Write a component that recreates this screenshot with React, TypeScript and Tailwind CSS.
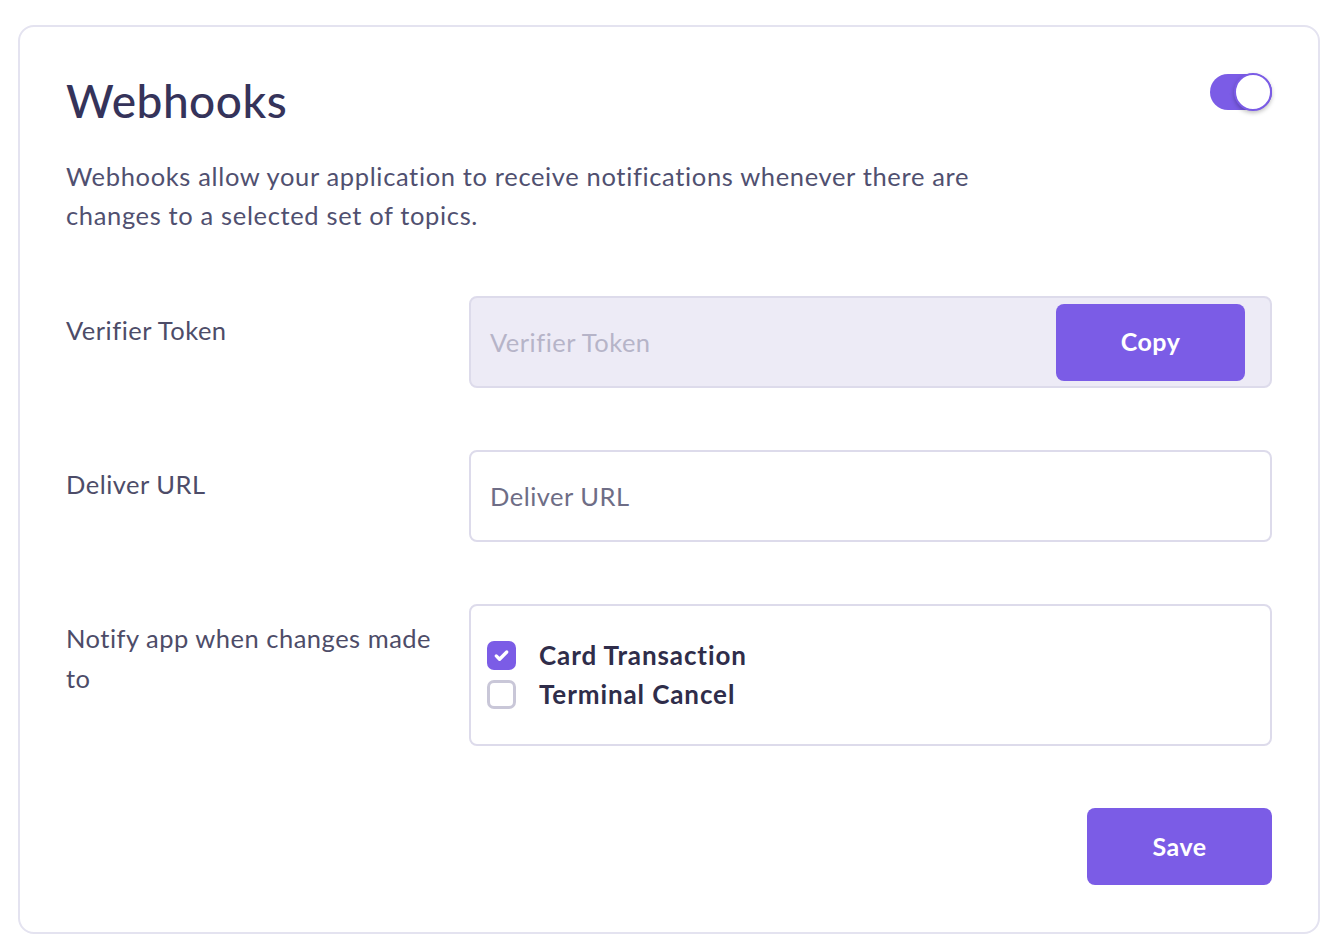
import { useState } from 'react';

function Check({ checked, label, onToggle }: { checked: boolean; label: string; onToggle: () => void }) {
  return (
    <label className="flex cursor-pointer items-center gap-[23px]" onClick={onToggle}>
      <span className={`flex h-[29px] w-[29px] items-center justify-center rounded-[7px] ${checked ? 'bg-[#7b5ce6]' : 'border-[3px] border-[#c9c7d8] bg-white'}`}>
        {checked && (
          <svg viewBox="0 0 24 24" className="h-[21px] w-[21px]" fill="none" stroke="white" strokeWidth="3.8" strokeLinecap="round" strokeLinejoin="round">
            <path d="M6 12.5l3.8 3.8L18 8" />
          </svg>
        )}
      </span>
      <span className="text-[26px] font-bold leading-[39px] tracking-[0.9px] text-[#2f2d4a]">{label}</span>
    </label>
  );
}

export default function App() {
  const [enabled, setEnabled] = useState(true);
  const [topics, setTopics] = useState({ card: true, terminal: false });

  return (
    <div className="min-h-screen bg-white pl-[18px] pr-[22px] pt-[25px] pb-[17px] font-['Lato',sans-serif]">
      <div className="rounded-[16px] border-2 border-[#e4e3f0] bg-white px-[46px] pt-[44px] pb-[47px]">
        <div className="flex items-start justify-between">
          <h1 className="text-[46px] font-medium leading-[60px] tracking-[0.5px] text-[#35335a]">Webhooks</h1>
          <button
            onClick={() => setEnabled(!enabled)}
            className="relative mt-[3px] h-[36px] w-[62px] rounded-full bg-[#7b5ce6]"
          >
            <span className="absolute right-0 top-[-1px] h-[38px] w-[38px] rounded-full border-2 border-[#7b5ce6] bg-white shadow-[0_2px_4px_rgba(0,0,0,0.25)]" />
          </button>
        </div>

        <p className="mt-[26px] w-[925px] text-[25.5px] leading-[39px] tracking-[0.65px] text-[#505070]">
          Webhooks allow your application to receive notifications whenever there are changes to a selected set of topics.
        </p>

        <div className="mt-[61px] flex flex-col gap-[62px]">
          <div className="flex">
            <div className="w-[403px] pt-[14px] text-[25.5px] leading-[40px] tracking-[0.5px] text-[#4d4c68]">Verifier Token</div>
            <div className="flex h-[92px] flex-1 items-center rounded-[8px] border-2 border-[#dddbeb] bg-[#edebf6] pl-[19px] pr-[25px]">
              <span className="flex-1 text-[25.5px] tracking-[0.5px] text-[#b6b4c8]">Verifier Token</span>
              <button className="h-[77px] w-[189px] rounded-[8px] bg-[#7b5ce6] text-[25px] font-bold tracking-[0.5px] text-white">Copy</button>
            </div>
          </div>

          <div className="flex">
            <div className="w-[403px] pt-[14px] text-[25.5px] leading-[40px] tracking-[0.5px] text-[#4d4c68]">Deliver URL</div>
            <div className="flex h-[92px] flex-1 items-center rounded-[8px] border-2 border-[#dddbeb] bg-white pl-[19px]">
              <span className="text-[25.5px] tracking-[0.5px] text-[#6e6d86]">Deliver URL</span>
            </div>
          </div>

          <div className="flex">
            <div className="w-[403px] pt-[14px] pr-[20px] text-[25.5px] leading-[40px] tracking-[0.5px] text-[#4d4c68]">Notify app when changes made to</div>
            <div className="flex h-[142px] flex-1 flex-col justify-center rounded-[8px] border-2 border-[#dddbeb] bg-white pl-[16px]">
              <Check checked={topics.card} label="Card Transaction" onToggle={() => setTopics({ ...topics, card: !topics.card })} />
              <Check checked={topics.terminal} label="Terminal Cancel" onToggle={() => setTopics({ ...topics, terminal: !topics.terminal })} />
            </div>
          </div>
        </div>

        <div className="mt-[62px] flex justify-end">
          <button className="h-[77px] w-[185px] rounded-[8px] bg-[#7b5ce6] text-[25px] font-bold tracking-[0.5px] text-white">Save</button>
        </div>
      </div>
    </div>
  );
}
